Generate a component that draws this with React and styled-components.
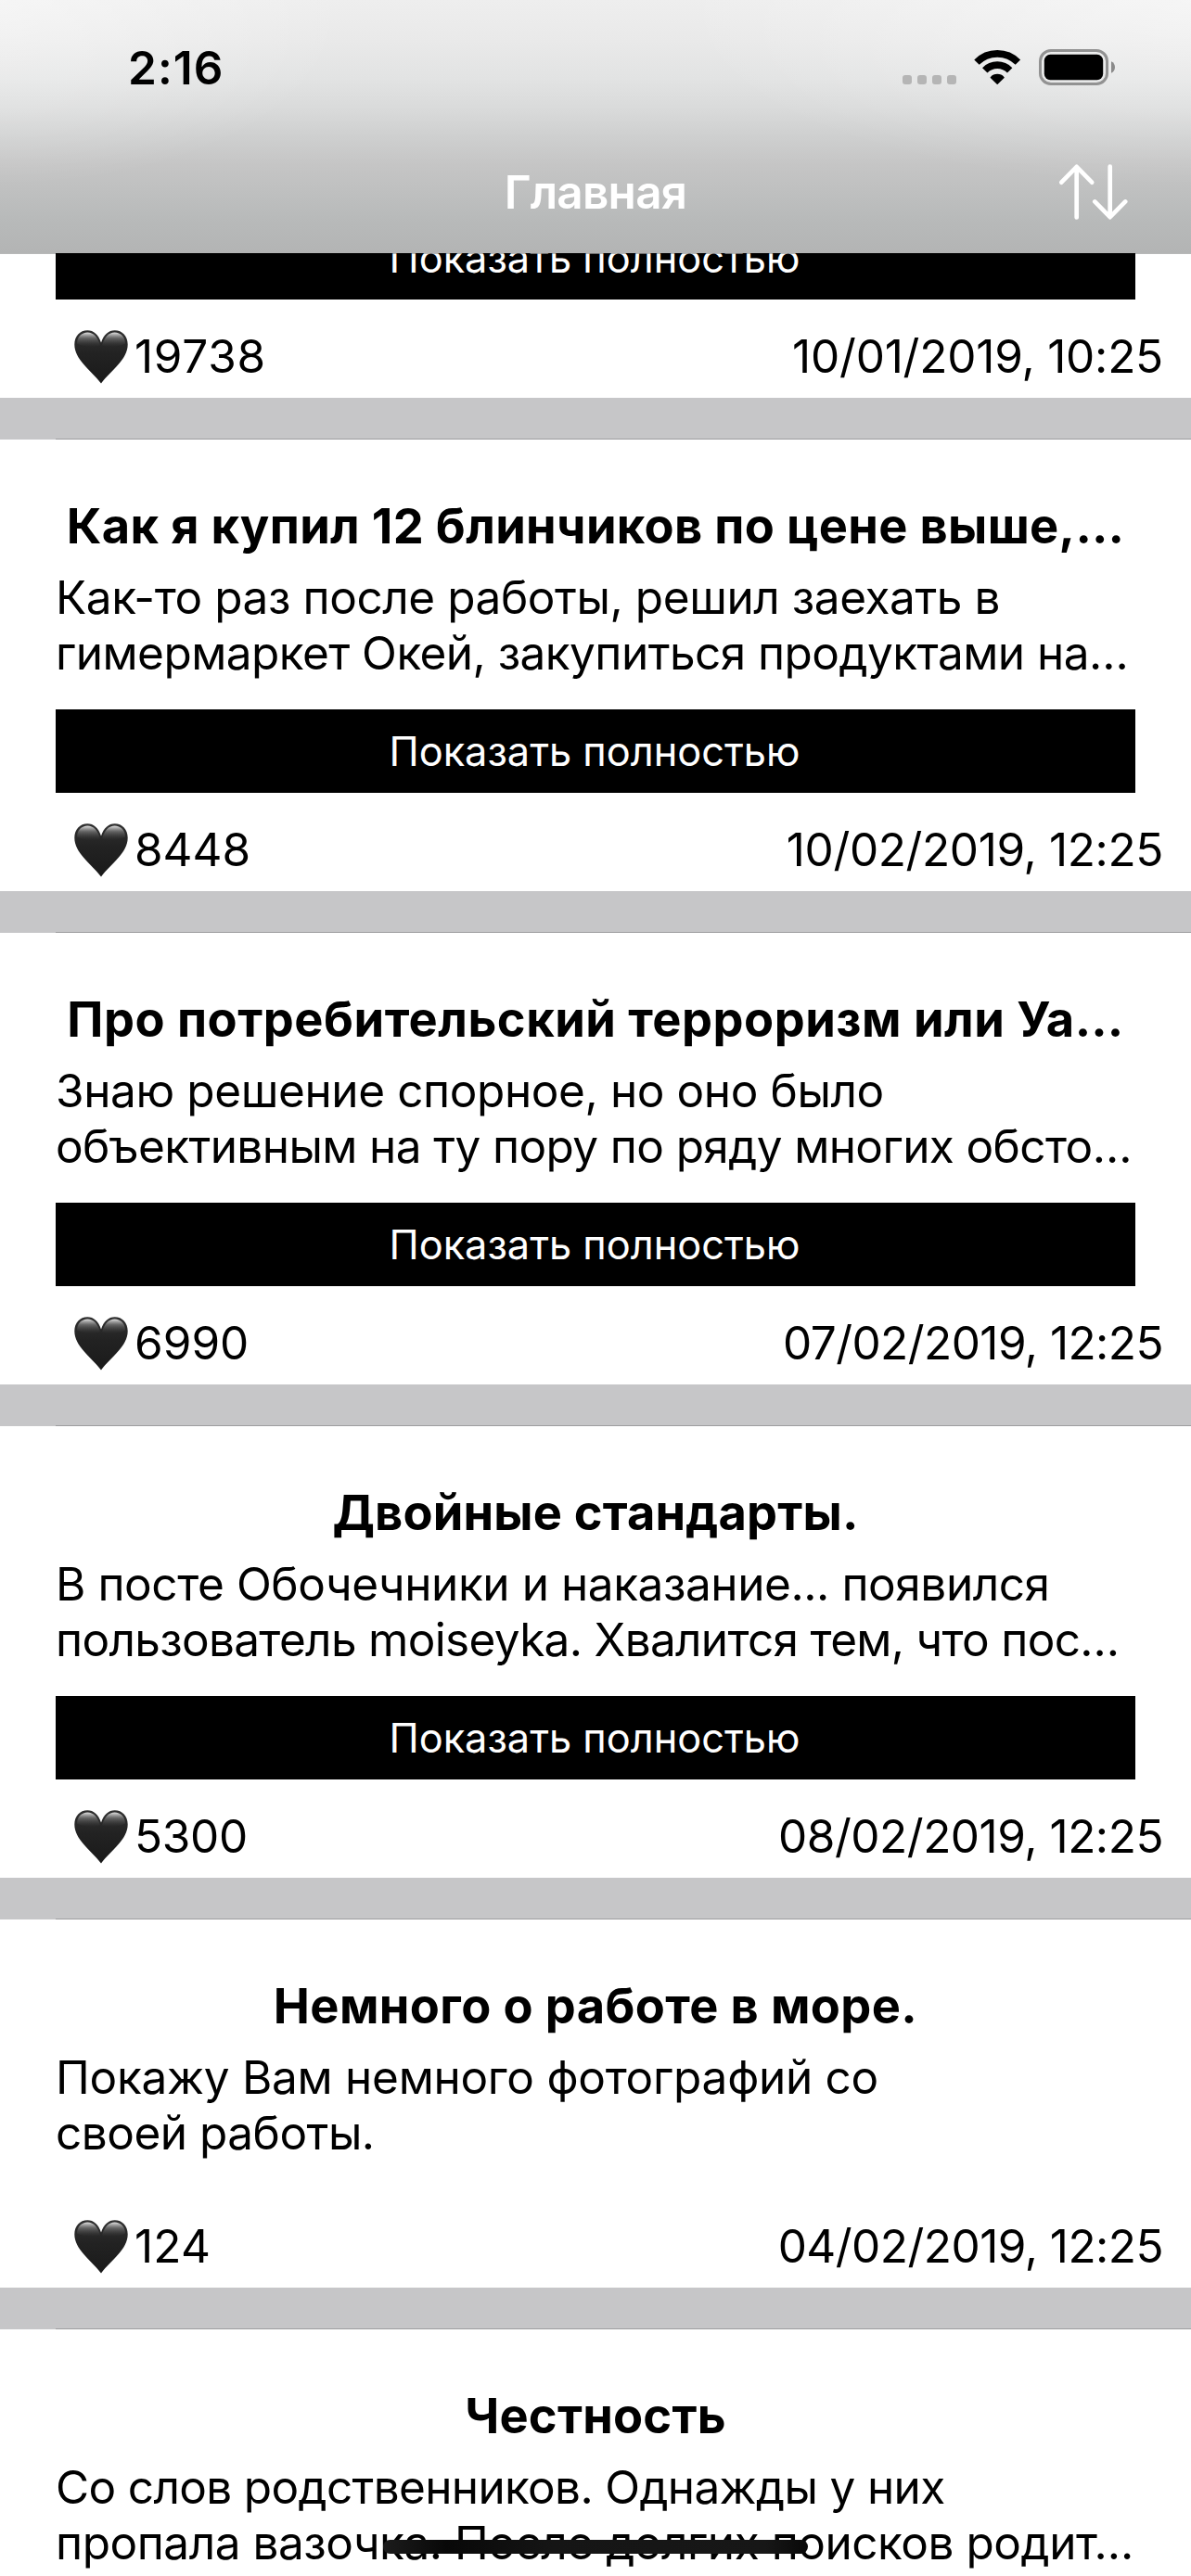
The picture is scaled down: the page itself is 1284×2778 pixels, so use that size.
import React from "react";
import styled, { createGlobalStyle } from "styled-components";

const GlobalStyle = createGlobalStyle`
  * { box-sizing: border-box; }
  body { margin: 0; background: #fff; }
`;

const Screen = styled.div`
  position: relative;
  display: flex;
  flex-direction: column;
  width: 1284px;
  height: 2778px;
  overflow: hidden;
  background: #fff;
  color: #000;
  font-family: Inter, "Liberation Sans", sans-serif;
  font-size: 49.5px;
`;

const Header = styled.header`
  position: relative;
  z-index: 1;
  flex: none;
  height: 273px;
  box-shadow: 0 1px 0 rgba(0, 0, 0, 0.28);
  background:
    radial-gradient(ellipse 380px 200px at 0 0, rgba(255, 255, 255, 0.45), rgba(255, 255, 255, 0)),
    radial-gradient(ellipse 560px 200px at 100% 0, rgba(255, 255, 255, 0.45), rgba(255, 255, 255, 0)),
    linear-gradient(
      #eeeeee 0,
      #e9e9e9 45px,
      #e2e3e3 85px,
      #d9dada 118px,
      #cecfcf 148px,
      #c5c5c5 178px,
      #bfc0c0 205px,
      #b8baba 235px,
      #b3b4b4 273px
    );
`;

const StatusBar = styled.div`
  display: flex;
  align-items: center;
  justify-content: space-between;
  height: 141px;
  padding: 4px 82px 0 138px;
`;

const Time = styled.span`
  font-weight: 600;
  letter-spacing: 1.1px;
`;

const StatusIcons = styled.div`
  display: flex;
  align-items: center;
  gap: 19px;
`;

const SignalDots = styled.div`
  display: flex;
  gap: 6px;
  margin-top: 27px;
`;

const Dot = styled.i`
  width: 10px;
  height: 10px;
  border-radius: 3px;
  background: #b5b5b5;
`;

const NavBar = styled.nav`
  display: grid;
  grid-template-columns: 1fr auto 1fr;
  align-items: center;
  height: 132px;
  color: #fff;
`;

const NavTitle = styled.h1`
  grid-column: 2;
  margin: 0;
  font-size: 49.5px;
  line-height: 132px;
  font-weight: 600;
  letter-spacing: -0.75px;
`;

const SortButton = styled.button`
  justify-self: end;
  display: flex;
  margin: 0 68px 0 0;
  padding: 0;
  border: 0;
  background: none;
  color: inherit;
`;

const Feed = styled.main`
  flex: 1;
  min-height: 0;
  overflow: hidden;
`;

const Post = styled.article`
  display: flex;
  flex-direction: column;
  padding-top: ${(p) => (p.$scrolled ? 0 : 63)}px;
  margin-top: ${(p) => (p.$scrolled ? -40 : 0)}px;
`;

const PostTitle = styled.h2`
  margin: 0;
  font-size: 52.4px;
  line-height: 60px;
  font-weight: 700;
  text-align: center;
  white-space: nowrap;
  letter-spacing: ${(p) => p.$tracking}px;
`;

const PostBody = styled.p`
  margin: 17px 60px 31px;
  line-height: 60px;
`;

const Line = styled.span`
  display: block;
  white-space: nowrap;
  letter-spacing: ${(p) => p.$tracking}px;
`;

const ShowMore = styled.button`
  height: 90px;
  margin: 0 60px;
  padding: 0 2px 0 0;
  border: 0;
  background: #000;
  color: #fff;
  font: 400 43.3px/90px Inter, "Liberation Sans", sans-serif;
`;

const PostFooter = styled.footer`
  display: flex;
  align-items: center;
  justify-content: space-between;
  height: 106px;
  padding: 16px 30px 0 80px;
  line-height: 90px;
`;

const Likes = styled.span`
  display: flex;
  align-items: center;
  gap: 7px;
  letter-spacing: ${(p) => p.$tracking}px;
`;

const PostDate = styled.time`
  letter-spacing: ${(p) => p.$tracking}px;
`;

const Divider = styled.div`
  display: flex;
  align-items: flex-end;
  height: 45px;
  padding-left: 60px;
  background: #c6c6c8;

  &::after {
    content: "";
    flex: 1;
    height: 1px;
    background: #9d9d9f;
  }
`;

const HomeIndicator = styled.div`
  position: absolute;
  z-index: 2;
  left: 413px;
  bottom: 24px;
  width: 458px;
  height: 15px;
  border-radius: 8px;
  background: linear-gradient(90deg, #1c1c1c, #080808 15%, #151515 40%, #171717 90%, #080808);
`;

const WifiIcon = () => (
  <svg width="51" height="38" viewBox="0 0 51 38">
    <g fill="none" stroke="#000" strokeWidth="7.6">
      <path d="M3 13.2A31.15 31.15 0 0 1 47.4 13.2" />
      <path d="M11.75 21.8A18.85 18.85 0 0 1 38.65 21.8" />
    </g>
    <path
      d="M25.2 36.2 18.3 29.6A9.3 9.3 0 0 1 32.1 29.6Z"
      stroke="#000"
      strokeWidth="1.4"
      strokeLinejoin="round"
    />
  </svg>
);

const BatteryIcon = () => (
  <svg width="82" height="39" viewBox="0 0 82 39">
    <rect x="1.5" y="1.5" width="72" height="36" rx="11.5" fill="none" stroke="#929292" strokeWidth="3" />
    <rect x="5.8" y="5.8" width="63.4" height="27.4" rx="6.5" />
    <path d="M78 13.3C80.6 14.4 82 16.8 82 19.5S80.6 24.6 78 25.7Z" fill="#8a8a8a" />
  </svg>
);

const SortIcon = () => (
  <svg
    width="76"
    height="64"
    viewBox="0 0 76 64"
    fill="none"
    stroke="currentColor"
    strokeWidth="4.7"
    strokeLinecap="round"
    strokeLinejoin="round"
  >
    <path d="M20.7 59.4V5M4.3 21.7 20.7 4.8 37.2 21.7" />
    <path d="M56.7 4.6V59M40.3 42.4 56.7 59.2 73.2 42.4" />
  </svg>
);

const HEART =
  "M29 13.5C26.2 5 21 .3 14.3 .3C6.2 .3 .3 6.6 .3 15.4C.3 31.5 17.5 42.5 29 57.4C40.5 42.5 57.7 31.5 57.7 15.4C57.7 6.6 51.8 .3 43.7 .3C37 .3 31.8 5 29 13.5Z";

const HeartSvg = styled.svg`
  margin-top: 1px;
`;

const HeartIcon = () => (
  <HeartSvg width="58" height="58" viewBox="0 0 58 58">
    <defs>
      <linearGradient id="heartBody" x1="0" y1="0" x2="0" y2="1">
        <stop offset="0" stopColor="#303030" />
        <stop offset="0.45" stopColor="#222" />
        <stop offset="1" stopColor="#1a1a1a" />
      </linearGradient>
      <linearGradient id="heartGloss" x1="0" y1="0" x2="0" y2="1">
        <stop offset="0" stopColor="#fff" stopOpacity="0.85" />
        <stop offset="0.4" stopColor="#aaa" stopOpacity="0.45" />
        <stop offset="1" stopColor="#555" stopOpacity="0" />
      </linearGradient>
    </defs>
    <path d={HEART} fill="url(#heartBody)" />
    <path
      d="M28 16.5C25.5 7.5 20.5 2.6 14.4 2.6C8 2.6 3 7.5 3 14.5C9 18 22 19 28 16.5Z"
      fill="url(#heartGloss)"
    />
    <path
      d="M30 16.5C32.5 7.5 37.5 2.6 43.6 2.6C50 2.6 55 7.5 55 14.5C49 18 36 19 30 16.5Z"
      fill="url(#heartGloss)"
    />
  </HeartSvg>
);

const posts = [
  { likes: ["19738", 0.7], date: ["10/01/2019, 10:25", -0.21], more: true, scrolled: true },
  {
    title: ["Как я купил 12 блинчиков по цене выше,…", 0.34],
    lines: [
      ["Как-то раз после работы, решил заехать в", -0.43],
      ["гимермаркет Окей, закупиться продуктами на…", -0.55],
    ],
    likes: ["8448", 0],
    date: ["10/02/2019, 12:25", -0.37],
    more: true,
  },
  {
    title: ["Про потребительский терроризм или Уа…", 0.5],
    lines: [
      ["Знаю решение спорное, но оно было", -0.4],
      ["объективным на ту пору по ряду многих обсто…", -0.61],
    ],
    likes: ["6990", 0],
    date: ["07/02/2019, 12:25", -0.55],
    more: true,
  },
  {
    title: ["Двойные стандарты.", 0.17],
    lines: [
      ["В посте Обочечники и наказание... появился", -0.43],
      ["пользователь moiseyka. Хвалится тем, что пос…", -0.68],
    ],
    likes: ["5300", -0.3],
    date: ["08/02/2019, 12:25", -0.47],
    more: true,
  },
  {
    title: ["Немного о работе в море.", 0.38],
    lines: [
      ["Покажу Вам немного фотографий со", -0.28],
      ["своей работы.", -0.5],
    ],
    likes: ["124", 0.2],
    date: ["04/02/2019, 12:25", -0.53],
  },
  {
    title: ["Честность", 0.2],
    lines: [
      ["Со слов родственников. Однажды у них", -0.66],
      ["пропала вазочка. После долгих поисков родит…", -0.47],
    ],
  },
];

const FeedPost = ({ title, lines, likes, date, more, scrolled }) => (
  <>
    <Post $scrolled={scrolled}>
      {title && <PostTitle $tracking={title[1]}>{title[0]}</PostTitle>}
      {lines && (
        <PostBody>
          {lines.map(([text, tracking]) => (
            <Line key={text} $tracking={tracking}>
              {text}
            </Line>
          ))}
        </PostBody>
      )}
      {more && <ShowMore>Показать полностью</ShowMore>}
      {likes && (
        <PostFooter>
          <Likes $tracking={likes[1]}>
            <HeartIcon />
            {likes[0]}
          </Likes>
          <PostDate $tracking={date[1]}>{date[0]}</PostDate>
        </PostFooter>
      )}
    </Post>
    {likes && <Divider />}
  </>
);

export default function App() {
  return (
    <Screen>
      <GlobalStyle />
      <Header>
        <StatusBar>
          <Time>2:16</Time>
          <StatusIcons>
            <SignalDots>
              <Dot />
              <Dot />
              <Dot />
              <Dot />
            </SignalDots>
            <WifiIcon />
            <BatteryIcon />
          </StatusIcons>
        </StatusBar>
        <NavBar>
          <NavTitle>Главная</NavTitle>
          <SortButton aria-label="Сортировка">
            <SortIcon />
          </SortButton>
        </NavBar>
      </Header>
      <Feed>
        {posts.map((post, i) => (
          <FeedPost key={i} {...post} />
        ))}
      </Feed>
      <HomeIndicator />
    </Screen>
  );
}
